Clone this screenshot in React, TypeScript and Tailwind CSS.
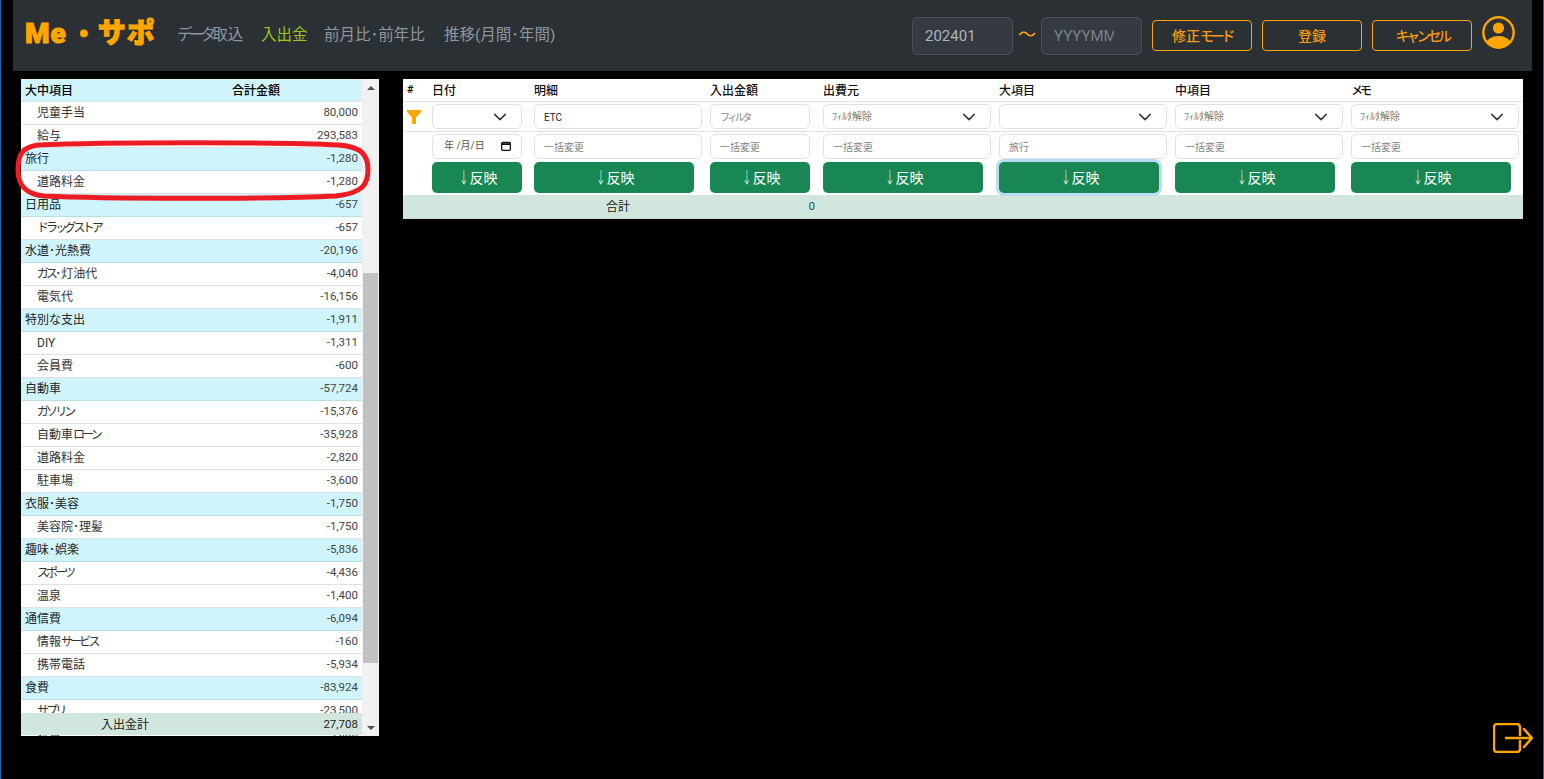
const ROWS: { name: string; amount: string; parent?: boolean }[] = [
  { name: '児童手当', amount: '80,000' },
  { name: '給与', amount: '293,583' },
  { name: '旅行', amount: '-1,280', parent: true },
  { name: '道路料金', amount: '-1,280' },
  { name: '日用品', amount: '-657', parent: true },
  { name: 'ドラッグストア', amount: '-657' },
  { name: '水道･光熱費', amount: '-20,196', parent: true },
  { name: 'ガス･灯油代', amount: '-4,040' },
  { name: '電気代', amount: '-16,156' },
  { name: '特別な支出', amount: '-1,911', parent: true },
  { name: 'DIY', amount: '-1,311' },
  { name: '会員費', amount: '-600' },
  { name: '自動車', amount: '-57,724', parent: true },
  { name: 'ガソリン', amount: '-15,376' },
  { name: '自動車ローン', amount: '-35,928' },
  { name: '道路料金', amount: '-2,820' },
  { name: '駐車場', amount: '-3,600' },
  { name: '衣服･美容', amount: '-1,750', parent: true },
  { name: '美容院･理髪', amount: '-1,750' },
  { name: '趣味･娯楽', amount: '-5,836', parent: true },
  { name: 'スポーツ', amount: '-4,436' },
  { name: '温泉', amount: '-1,400' },
  { name: '通信費', amount: '-6,094', parent: true },
  { name: '情報サービス', amount: '-160' },
  { name: '携帯電話', amount: '-5,934' },
  { name: '食費', amount: '-83,924', parent: true },
  { name: 'サプリ', amount: '-23,500' },
  { name: '雑貨', amount: '-4,000' },
];

const COLUMNS = ['日付', '明細', '入出金額', '出費元', '大項目', '中項目', 'メモ'];
const gridClass = 'grid grid-cols-[29px_102px_176px_113px_176px_176px_176px_172px]';
const inputClass =
  'block w-full h-[25px] border border-[#dee2e6] rounded-[5px] bg-white pl-[9px] pt-px text-[10px] text-[#212529] placeholder:text-[#858585] outline-none';

// katakana in the original font is much narrower than Noto's, so tighten those runs
function Jp({ text }: { text: string }) {
  const parts = text.split(/([゠-ヿ]+)/);
  return (
    <>
      {parts.map((p, i) =>
        /[゠-ヿ]/.test(p) ? (
          <span key={i} className="tracking-[-0.24em]">{p}</span>
        ) : (
          <span key={i}>{p}</span>
        )
      )}
    </>
  );
}

function Chevron() {
  return (
    <svg viewBox="0 0 16 16" className="w-[14px] h-[14px] absolute right-[14px] top-[5px]" fill="none" stroke="#343a40" strokeWidth="1.8" strokeLinecap="round" strokeLinejoin="round">
      <path d="m2 5 6 6 6-6" />
    </svg>
  );
}

function SelectBox({ label }: { label?: string }) {
  return (
    <div className="relative h-[25px] border border-[#dee2e6] rounded-[5px] bg-white pl-[8px] text-[10px] leading-[23px] text-[#777]">
      {label}
      <Chevron />
    </div>
  );
}

function ApplyButton({ width = 'w-[160px]', focus }: { width?: string; focus?: boolean }) {
  return (
    <button
      className={
        width + ' h-[31px] rounded-[5px] bg-[#198754] text-white text-[14px] leading-none flex items-center justify-center ' +
        (focus ? 'ring-[3px] ring-[#b9dcf5]' : '')
      }
    >
      <span className="inline-block w-[10px] text-center text-[16px] font-light scale-x-[0.6]">↓</span>
      <span className="ml-[3px]">反映</span>
    </button>
  );
}

function LeftPanel() {
  return (
    <div className="relative w-[358px] h-[657px] flex bg-white shrink-0">
      <div className="relative w-[341px] h-full overflow-hidden">
        <div className="h-[23px] pt-px bg-[#cff4fc] border-b border-[#dee2e6] flex items-center pl-1 text-[12px] font-medium text-black">
          <span className="w-[207px]">大中項目</span>
          <span>合計金額</span>
        </div>
        {ROWS.map((r, i) => (
          <div
            key={i}
            className={
              'h-[23px] flex items-center justify-between pr-1 text-[12px] border-b ' +
              (r.parent ? 'bg-[#cff4fc] border-[#b6dfe8] pl-1 text-[#212529]' : 'bg-white border-[#dee2e6] pl-4 text-[#333]')
            }
          >
            <span><Jp text={r.name} /></span>
            <span className="text-[11.5px] text-[#444]">{r.amount}</span>
          </div>
        ))}
        <div className="absolute left-0 right-0 bottom-px h-[22px] pt-px bg-[#d1e7dd] flex items-center justify-between pr-1 text-[12px] text-[#222]">
          <span className="pl-20">入出金計</span>
          <span className="text-[11.5px]">27,708</span>
        </div>
      </div>
      {/* scrollbar */}
      <div className="w-[17px] h-full bg-[#f1f1f1] flex flex-col items-center">
        <div className="h-[17px] flex items-center justify-center">
          <div className="w-0 h-0 border-x-[4px] border-x-transparent border-b-[4px] border-b-[#505050]" />
        </div>
        <div className="mt-[177px] w-[15px] h-[390px] bg-[#c1c1c1]" />
        <div className="mt-auto h-[17px] flex items-center justify-center">
          <div className="w-0 h-0 border-x-[4px] border-x-transparent border-t-[4px] border-t-[#505050]" />
        </div>
      </div>
      {/* hand-drawn red marker around 旅行 */}
      <svg className="absolute left-[-7px] top-[61px]" width="358" height="62" viewBox="0 0 358 62" fill="none">
        <path
          d="M24 5 C90 2 270 2 325 5 C348 7 354 15 354 30 C354 45 348 53 322 56 C260 59 90 59 30 56 C10 54 4 44 4 30 C4 15 8 7 24 5 Z"
          stroke="#ed1c24"
          strokeWidth="5"
        />
      </svg>
    </div>
  );
}

function DetailTable() {
  return (
    <div className="w-[1120px] h-[140px] bg-white shrink-0">
      <div className={gridClass + ' h-[23px] pt-px items-center border-b border-[#dee2e6] text-[12px] font-medium text-[#111]'}>
        <span className="pl-1 text-[11px] font-bold">#</span>
        {COLUMNS.map((c) => (
          <span key={c}><Jp text={c} /></span>
        ))}
      </div>
      <div className={gridClass + ' h-[30px] pt-[2px] border-b border-[#dee2e6]'}>
        <svg viewBox="0 0 14 14" className="w-[14px] h-[14px] ml-1 mt-[6px]">
          <path d="M0 0h14v2L9 7.5V14H5V7.5L0 2z" fill="#ffa500" />
        </svg>
        <div className="pr-3"><SelectBox /></div>
        <div className="pr-2"><input readOnly value="ETC" className={inputClass} /></div>
        <div className="pr-[13px]"><input readOnly placeholder="フィルタ" className={inputClass + ' tracking-[-2.5px]'} /></div>
        <div className="pr-2"><SelectBox label="ﾌｨﾙﾀ解除" /></div>
        <div className="pr-2"><SelectBox /></div>
        <div className="pr-2"><SelectBox label="ﾌｨﾙﾀ解除" /></div>
        <div className="pr-1"><SelectBox label="ﾌｨﾙﾀ解除" /></div>
      </div>
      <div className={gridClass + ' h-[28px] pt-[2px]'}>
        <div />
        <div className="pr-3">
          <div className="relative h-[25px] border border-[#dee2e6] rounded-[5px] bg-white pl-[11px] text-[10px] leading-[22px] text-[#555]">
            年 /月/日
            <svg viewBox="0 0 16 16" className="w-[10px] h-[10px] absolute right-[10px] top-[6px]" fill="none" stroke="#111" strokeWidth="2">
              <rect x="1" y="2" width="14" height="13" rx="2" />
              <path d="M1 5h14" strokeWidth="3" />
            </svg>
          </div>
        </div>
        <div className="pr-2"><input readOnly placeholder="一括変更" className={inputClass} /></div>
        <div className="pr-[13px]"><input readOnly placeholder="一括変更" className={inputClass} /></div>
        <div className="pr-2"><input readOnly placeholder="一括変更" className={inputClass} /></div>
        <div className="pr-2"><input readOnly placeholder="旅行" className={inputClass} /></div>
        <div className="pr-2"><input readOnly placeholder="一括変更" className={inputClass} /></div>
        <div className="pr-1"><input readOnly placeholder="一括変更" className={inputClass} /></div>
      </div>
      <div className={gridClass + ' h-[35px] pt-[2px]'}>
        <div />
        <ApplyButton width="w-[90px]" />
        <ApplyButton />
        <ApplyButton width="w-[100px]" />
        <ApplyButton />
        <ApplyButton focus />
        <ApplyButton />
        <ApplyButton />
      </div>
      <div className={gridClass + ' h-[24px] pt-px items-center bg-[#d1e7dd] border-b border-[#c5dbd1] text-[12px] text-[#222]'}>
        <div />
        <div />
        <div className="text-center pr-2">合計</div>
        <div className="text-right pr-2 text-[11.5px] text-[#1a4f80]">0</div>
      </div>
    </div>
  );
}

function OutlineButton({ children }: { children: React.ReactNode }) {
  return (
    <button className="w-[100px] h-[31px] border border-[#ffa500] rounded-[4px] text-[14px] font-medium text-[#f79a0e] leading-none">
      {children}
    </button>
  );
}

export default function App() {
  return (
    <div className="w-[1544px] h-[779px] overflow-hidden relative bg-black border-x border-[#0f6cbd] font-['Roboto','Noto_Sans_CJK_JP',sans-serif]">
      <header className="ml-3 mr-[11px] h-[71px] bg-[#2b3035] flex items-center pl-3 pr-[17px]">
        <div className="w-[152px] flex items-center text-[#ffa500] font-black text-[28px] leading-none [-webkit-text-stroke:1px_#ffa500] tracking-[1px] -mt-1">
          Me<span className="ml-[5px] mr-px text-[24px]">・</span><span className="text-[28px] tracking-[1px]">サポ</span>
        </div>
        <nav className="flex items-center pt-px text-[15.5px] text-[#8f959c]">
          <span className="w-[84px]"><Jp text="データ取込" /></span>
          <span className="w-[63px] text-[#9fc31c]">入出金</span>
          <span className="w-[120px]">前月比･前年比</span>
          <span>推移(月間･年間)</span>
        </nav>
        <div className="ml-auto flex items-center">
          <input readOnly value="202401" className="w-[101px] h-[38px] rounded-[6px] border border-[#495057] bg-[#343a40] px-3 text-[15px] text-[#adb5bd] outline-none" />
          <span className="w-[28px] text-center text-[#ffa500] text-[18px] -mt-[3px]">〜</span>
          <input readOnly placeholder="YYYYMM" className="w-[101px] h-[38px] rounded-[6px] border border-[#495057] bg-[#343a40] pl-3 pr-[27px] text-[15px] placeholder:text-[#7b8289] outline-none" />
          <div className="flex gap-[10px] ml-[10px]">
            <OutlineButton><Jp text="修正モード" /></OutlineButton>
            <OutlineButton>登録</OutlineButton>
            <OutlineButton><Jp text="キャンセル" /></OutlineButton>
          </div>
          <svg viewBox="0 0 33 33" className="w-[33px] h-[33px] ml-[10px] -mt-[7px]">
            <defs>
              <clipPath id="userCircle"><circle cx="16.5" cy="16.5" r="15.2" /></clipPath>
            </defs>
            <circle cx="16.5" cy="16.5" r="15.2" fill="none" stroke="#ffa500" strokeWidth="2.4" />
            <circle cx="16.5" cy="12" r="5.6" fill="#ffa500" />
            <ellipse cx="16.5" cy="28" rx="12" ry="8" fill="#ffa500" clipPath="url(#userCircle)" />
          </svg>
        </div>
      </header>

      <main className="mt-2 ml-5 flex gap-6 items-start">
        <LeftPanel />
        <DetailTable />
      </main>

      <svg viewBox="0 0 40 30" className="absolute right-[10px] bottom-[26px] w-[40px] h-[30px]" fill="none" stroke="#ffa500" strokeWidth="2.5" strokeLinecap="round" strokeLinejoin="round">
        <path d="M27 12V4a3 3 0 0 0-3-3H4a3 3 0 0 0-3 3v22a3 3 0 0 0 3 3h20a3 3 0 0 0 3-3v-8" />
        <path d="M13 15h26M31 6l8 9-8 9" />
      </svg>
    </div>
  );
}
